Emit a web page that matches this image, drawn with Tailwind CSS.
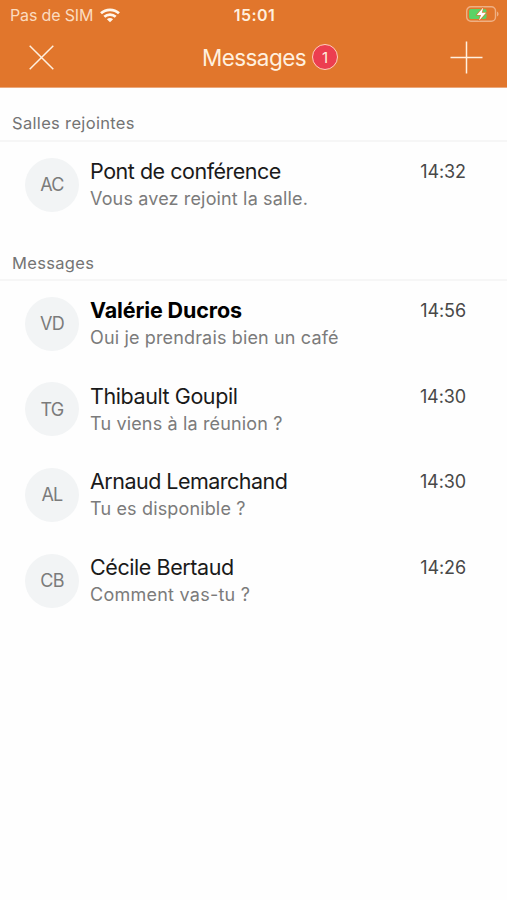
<!DOCTYPE html>
<html lang="fr">
<head>
<meta charset="utf-8">
<title>Messages</title>
<script src="https://cdn.jsdelivr.net/npm/@tailwindcss/browser@4"></script>
</head>
<body class="bg-[#fefefe] font-['Inter',sans-serif] w-[507px] h-[900px] overflow-hidden">
<header class="h-[88px] bg-[#e1762c] text-[#fff0df] border-b border-[#eba87c]">
  <div class="h-[30px] grid grid-cols-[1fr_auto_1fr] items-center pl-[10px] pr-[8px]">
    <div class="flex items-center gap-[7px]">
      <span class="text-[16px] leading-[30px] text-[#fbdcc0] whitespace-nowrap tracking-[-0.15px]">Pas de SIM</span>
      <svg class="w-[20px] h-[15px]" viewBox="0 0 20 15" fill="none" stroke="#fff6ea" stroke-width="2.7"><path d="M1 5.3C6 .6 14 .6 19 5.3"/><path d="M4.3 8.8C7.5 5.9 12.5 5.9 15.7 8.8"/><path d="M10 14.2 6.9 11.2C8.6 9.6 11.4 9.6 13.1 11.2Z" fill="#fff6ea" stroke="none"/></svg>
    </div>
    <span class="text-[16px] leading-[30px] font-semibold tracking-[0.5px]">15:01</span>
    <svg class="justify-self-end w-[34px] h-[18px] -mt-[2px]" viewBox="0 0 34 18"><rect x="1.7" y="1.7" width="28.8" height="14.6" rx="4.2" fill="none" stroke="#efb084" stroke-width="1.4"/><path d="M32 6.5Q33.6 7.2 33.6 9T32 11.5Z" fill="#efb084"/><rect x="4" y="4" width="17.5" height="10" rx="2" fill="#5bd266"/><path d="M18.3 2.4 11.8 9.9H16L13.9 15.8 21 7.8H16.8Z" fill="#fff" stroke="#e1762c" stroke-width="1.2" paint-order="stroke"/></svg>
  </div>
  <div class="h-[54px] grid grid-cols-[1fr_auto_1fr] items-center pl-[28px] pr-[24px]">
    <svg class="w-[27px] h-[27px]" viewBox="0 0 27 27" stroke="#fff0df" stroke-width="1.5"><path d="M1.7 1.7 25.3 25.3M25.3 1.7 1.7 25.3"/></svg>
    <div class="flex items-center gap-[6px] pl-[29px]">
      <h1 class="text-[22.5px] leading-[30px] tracking-[-0.55px] pt-px">Messages</h1>
      <span class="size-[26px] rounded-full bg-[#ec3e50] border-[1.5px] border-[#ffd0bd] flex items-center justify-center text-[15px] leading-none">1</span>
    </div>
    <svg class="justify-self-end w-[33px] h-[33px]" viewBox="0 0 33 33" stroke="#fff0df" stroke-width="1.5"><path d="M16.5 .5V32.5M.5 16.5H32.5"/></svg>
  </div>
</header>
<main>
  <section>
    <h2 class="h-[53.5px] pt-[21px] pl-[12px] text-[16.5px] leading-[28px] text-[#747474] border-b-2 border-[#f6f6f6] tracking-[0.33px]">Salles rejointes</h2>
    <div class="h-[86px] flex items-center pl-[25px] pr-[41px]">
      <div class="size-[54px] rounded-full bg-[#f2f4f5] text-[#7b7b7b] text-[18px] tracking-[-0.7px] flex items-center justify-center">AC</div>
      <div class="ml-[11px] flex-1 whitespace-nowrap"><div class="text-[21.5px] leading-[28px] tracking-[-0.48px] text-[#1a1a1a]">Pont de conférence</div><div class="text-[18px] leading-[27px] tracking-[0.15px] text-[#7b7b7b]">Vous avez rejoint la salle.</div></div>
      <time class="self-start pt-[17px] text-[18px] leading-[26px] tracking-[-0.1px] text-[#484848]">14:32</time>
    </div>
  </section>
  <section>
    <h2 class="h-[53.5px] pt-[21.5px] pl-[12px] text-[16.5px] leading-[28px] text-[#747474] border-b-2 border-[#f6f6f6] tracking-[0.33px]">Messages</h2>
    <div class="h-[85.6px] flex items-center pl-[25px] pr-[41px]">
      <div class="size-[54px] rounded-full bg-[#f2f4f5] text-[#7b7b7b] text-[18px] tracking-[-0.7px] flex items-center justify-center">VD</div>
      <div class="ml-[11px] flex-1 whitespace-nowrap"><div class="text-[21.5px] leading-[28px] tracking-[-0.12px] font-bold text-black">Valérie Ducros</div><div class="text-[18px] leading-[27px] tracking-[0.15px] text-[#7b7b7b]">Oui je prendrais bien un café</div></div>
      <time class="self-start pt-[17px] text-[18px] leading-[26px] tracking-[-0.1px] text-[#484848]">14:56</time>
    </div>
    <div class="h-[85.6px] flex items-center pl-[25px] pr-[41px]">
      <div class="size-[54px] rounded-full bg-[#f2f4f5] text-[#7b7b7b] text-[18px] tracking-[-0.7px] flex items-center justify-center">TG</div>
      <div class="ml-[11px] flex-1 whitespace-nowrap"><div class="text-[21.5px] leading-[28px] tracking-[-0.42px] text-[#1a1a1a]">Thibault Goupil</div><div class="text-[18px] leading-[27px] tracking-[0.15px] text-[#7b7b7b]">Tu viens à la réunion ?</div></div>
      <time class="self-start pt-[17px] text-[18px] leading-[26px] tracking-[-0.1px] text-[#484848]">14:30</time>
    </div>
    <div class="h-[85.6px] flex items-center pl-[25px] pr-[41px]">
      <div class="size-[54px] rounded-full bg-[#f2f4f5] text-[#7b7b7b] text-[18px] tracking-[-0.7px] flex items-center justify-center">AL</div>
      <div class="ml-[11px] flex-1 whitespace-nowrap"><div class="text-[21.5px] leading-[28px] tracking-[-0.52px] text-[#1a1a1a]">Arnaud Lemarchand</div><div class="text-[18px] leading-[27px] tracking-[0.15px] text-[#7b7b7b]">Tu es disponible ?</div></div>
      <time class="self-start pt-[17px] text-[18px] leading-[26px] tracking-[-0.1px] text-[#484848]">14:30</time>
    </div>
    <div class="h-[85.6px] flex items-center pl-[25px] pr-[41px]">
      <div class="size-[54px] rounded-full bg-[#f2f4f5] text-[#7b7b7b] text-[18px] tracking-[-0.7px] flex items-center justify-center">CB</div>
      <div class="ml-[11px] flex-1 whitespace-nowrap"><div class="text-[21.5px] leading-[28px] tracking-[-0.42px] text-[#1a1a1a]">Cécile Bertaud</div><div class="text-[18px] leading-[27px] tracking-[0.25px] text-[#7b7b7b]">Comment vas-tu ?</div></div>
      <time class="self-start pt-[17px] text-[18px] leading-[26px] tracking-[-0.1px] text-[#484848]">14:26</time>
    </div>
  </section>
</main>
</body>
</html>
